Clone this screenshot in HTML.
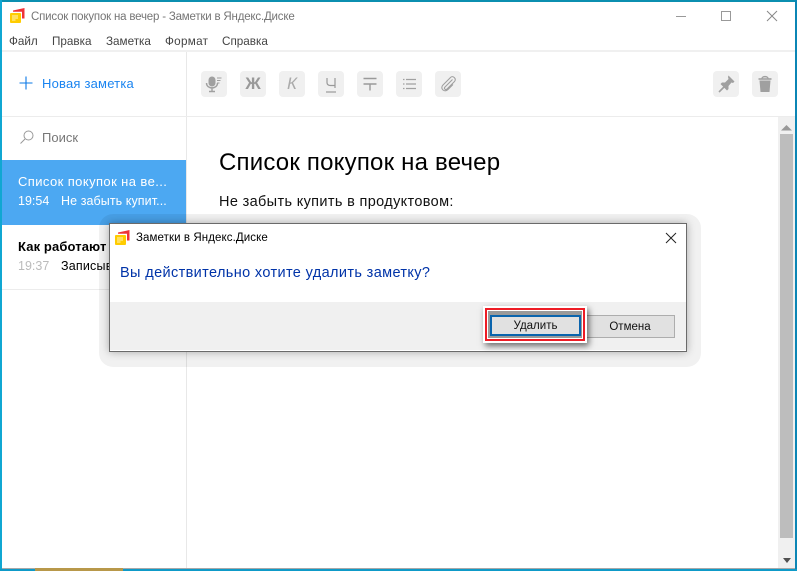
<!DOCTYPE html>
<html lang="ru"><head><meta charset="utf-8">
<style>
html,body{margin:0;padding:0;width:797px;height:571px;overflow:hidden;background:#fff;font-family:"Liberation Sans","DejaVu Sans",sans-serif}
div,span{position:absolute;white-space:nowrap}
.m{top:35px;font-size:11.7px;color:#444;line-height:14px}
.b{top:71px;width:26px;height:26px;background:#f0f0f0;border-radius:4px}
.b svg{position:absolute;left:0;top:0}
</style></head><body>
<!-- window frame -->
<div style="left:0;top:0;width:797px;height:2px;background:#0b8fb0"></div>
<div style="left:0;top:0;width:2px;height:571px;background:#10a7d2"></div>
<div style="left:795px;top:0;width:2px;height:571px;background:#0b86b5"></div>
<div style="left:0;top:569px;width:797px;height:2px;background:#0e9ac8"></div>
<div style="left:2px;top:568px;width:793px;height:1px;background:#a8a8a8"></div>
<div style="left:35px;top:568px;width:88px;height:3px;background:#b8984a"></div>
<!-- title -->
<svg style="position:absolute;left:9px;top:7px" width="18" height="18" viewBox="0 0 18 18"><path d="M4 3.500L15.500 1V11.500H13V4.800H4z" fill="#ee3338"/><rect x="1" y="6" width="11" height="10" rx="1" fill="#fc0"/><path d="M3 9h6M3 11h6M3 13h3.500" stroke="#fff5c0" stroke-width="1"/></svg>
<div style="left:31px;top:10px;font-size:11.500px;line-height:15px;color:#757575;letter-spacing:-.19px">Список покупок на вечер - Заметки в Яндекс.Диске</div>
<svg style="position:absolute;left:670px;top:5px" width="120" height="22"><path d="M6 11.500H16" stroke="#999" stroke-width="1"/><rect x="51.500" y="6.500" width="9" height="9" fill="none" stroke="#999"/><path d="M97 6L107 16M107 6L97 16" stroke="#888" stroke-width="1"/></svg>
<!-- menu -->
<div class="m" style="left:9px">Файл</div>
<div class="m" style="left:52px">Правка</div>
<div class="m" style="left:106px">Заметка</div>
<div class="m" style="left:165px;letter-spacing:.3px">Формат</div>
<div class="m" style="left:222px">Справка</div>
<div style="left:2px;top:50px;width:793px;height:2px;background:#f0f0f0"></div>
<!-- sidebar -->
<div style="left:186px;top:52px;width:1px;height:516px;background:#e8e8e8"></div>
<div style="left:2px;top:116px;width:793px;height:1px;background:#ececec"></div>
<svg style="position:absolute;left:19px;top:76px" width="14" height="14"><path d="M7 .5V13.500M.5 7H13.500" stroke="#0a78e6" stroke-width="1.100"/></svg>
<div style="left:42px;top:76px;font-size:13px;line-height:16px;color:#1a84f0;letter-spacing:.2px">Новая заметка</div>
<svg style="position:absolute;left:19px;top:129px" width="16" height="16"><circle cx="9.500" cy="6.500" r="4.500" fill="none" stroke="#999"/><path d="M6 10L1.500 14.500" stroke="#999"/></svg>
<div style="left:42px;top:130px;font-size:13px;line-height:16px;color:#777">Поиск</div>
<div style="left:2px;top:160px;width:184px;height:65px;background:#4ca8f2"></div>
<div style="left:18px;top:174px;font-size:13px;line-height:16px;color:#fff;letter-spacing:.41px">Список покупок на ве...</div>
<div style="left:18px;top:194px;font-size:12.500px;line-height:15px;color:#fff">19:54</div>
<div style="left:61px;top:194px;font-size:12.500px;line-height:15px;color:#fff;letter-spacing:.08px">Не забыть купит...</div>
<div style="left:18px;top:239px;font-size:13px;line-height:16px;color:#000;font-weight:bold;letter-spacing:.12px">Как работают</div>
<div style="left:18px;top:259px;font-size:12.500px;line-height:15px;color:#bbb">19:37</div>
<div style="left:61px;top:259px;font-size:12.500px;line-height:15px;color:#000;letter-spacing:.2px">Записыв</div>
<div style="left:2px;top:289px;width:184px;height:1px;background:#ececec"></div>
<!-- toolbar -->
<div class="b" style="left:201px"><svg width="26" height="26"><rect x="7.500" y="5.500" width="7" height="10" rx="3.500" fill="#a0a0a0"/><path d="M5.500 12c0 6.500 11 6.500 11 0M11 17v3.500M8 20.500h6" fill="none" stroke="#a0a0a0" stroke-width="1.400"/><path d="M16 7h4.500M16 9.500h3.500M16 12h2.500" stroke="#a0a0a0"/></svg></div>
<div class="b" style="left:240px;color:#999;font-size:17px;font-weight:bold;line-height:26px;text-align:center">Ж</div>
<div class="b" style="left:279px;color:#aaa;font-size:17px;font-style:italic;line-height:26px;text-align:center">К</div>
<div class="b" style="left:318px"><svg width="26" height="26"><path d="M9 7v4.500c0 2 1.500 3 3.500 3H17M17 7V17" fill="none" stroke="#999" stroke-width="1.200"/><path d="M8 21H18" stroke="#999" stroke-width="1.200"/></svg></div>
<div class="b" style="left:357px"><svg width="26" height="26"><path d="M6.500 7.500H19.500M6.500 13H19.500M13 13V19.500" stroke="#999" stroke-width="1.400" fill="none"/></svg></div>
<div class="b" style="left:396px"><svg width="26" height="26"><path d="M10 8.500H20M10 13H20M10 17.500H20M7 8.500H8.500M7 13H8.500M7 17.500H8.500" stroke="#a0a0a0" stroke-width="1.200"/></svg></div>
<div class="b" style="left:435px"><svg width="26" height="26"><path d="M17.500 8.500L10 16c-1.500 1.500 .5 3.500 2 2L19.500 10.500c2.500-2.500-1.500-6.500-4-4L8 14c-3.500 3.500 1.500 8 5 4.500l5-5" fill="none" stroke="#a0a0a0" stroke-width="1.100"/></svg></div>
<div class="b" style="left:713px"><svg width="26" height="26"><path d="M15.500 4.500L21.500 10.500 20 12 18.500 11.500 15.500 15 15.500 18 14 19.500 7.500 13 9 11.500 12 11.500 15.500 8 15 6z" fill="#a0a0a0"/><path d="M11 16L6 21" stroke="#a0a0a0" stroke-width="1.600"/></svg></div>
<div class="b" style="left:752px"><svg width="26" height="26"><path d="M7.500 9.500H18.500L17.500 21H8.500z" fill="#a0a0a0"/><path d="M6.500 8H19.500" stroke="#a0a0a0" stroke-width="1.600"/><path d="M10 7.500c0-2.500 6-2.500 6 0" fill="none" stroke="#a0a0a0" stroke-width="1.400"/></svg></div>
<!-- note -->
<div style="left:219px;top:149px;font-size:24px;line-height:28px;color:#000;letter-spacing:.2px">Список покупок на вечер</div>
<div style="left:219px;top:193px;font-size:14.500px;line-height:18px;color:#111;letter-spacing:.35px">Не забыть купить в продуктовом:</div>
<!-- scrollbar -->
<div style="left:778px;top:117px;width:17px;height:451px;background:#f0f0f0"></div>
<div style="left:780px;top:134px;width:13px;height:404px;background:#bdbdbd"></div>
<svg style="position:absolute;left:781px;top:124px" width="12" height="7"><path d="M0 6.500L5.500 1 11 6.500z" fill="#999"/></svg>
<svg style="position:absolute;left:783px;top:558px" width="10" height="6"><path d="M0 0H8L4 5z" fill="#505050"/></svg>
<!-- dialog halo -->
<div style="left:99px;top:214px;width:602px;height:153px;background:rgba(0,0,0,.055);border-radius:14px"></div>
<!-- dialog -->
<div style="left:109px;top:223px;width:576px;height:127px;background:#fff;border:1px solid #6a6a6a;box-shadow:0 0 8px rgba(0,0,0,.3)"></div>
<div style="left:110px;top:302px;width:576px;height:48px;background:#f0f0f0"></div>
<svg style="position:absolute;left:114px;top:229px" width="18" height="18" viewBox="0 0 18 18"><path d="M4 3.500L15.500 1V11.500H13V4.800H4z" fill="#ee3338"/><rect x="1" y="6" width="11" height="10" rx="1" fill="#fc0"/><path d="M3 9h6M3 11h6M3 13h3.500" stroke="#fff5c0" stroke-width="1"/></svg>
<div style="left:136px;top:231px;font-size:11.500px;line-height:15px;color:#000;letter-spacing:.09px">Заметки в Яндекс.Диске</div>
<svg style="position:absolute;left:664px;top:231px" width="14" height="14"><path d="M2 2L12 12M12 2L2 12" stroke="#222" stroke-width="1"/></svg>
<div style="left:120px;top:264px;font-size:14.500px;line-height:18px;color:#0033a8;letter-spacing:.37px">Вы действительно хотите удалить заметку?</div>
<!-- buttons -->
<div style="left:583px;top:315px;width:90px;height:21px;background:#e1e1e1;border:1px solid #adadad"></div>
<div style="left:585px;top:316px;width:90px;height:22px;font-size:11.500px;line-height:22px;text-align:center;color:#111">Отмена</div>
<div style="left:483px;top:306px;width:104px;height:37px;background:#fff;box-shadow:2px 3px 6px rgba(0,0,0,.55)"></div>
<div style="left:485px;top:308px;width:96px;height:29px;border:2px solid #ee1c25;background:#fff"></div>
<div style="left:488px;top:311px;width:94px;height:27px;background:#9a9a9a"></div>
<div style="left:490px;top:315px;width:87px;height:17px;background:#e1e1e1;border:2px solid #0a64ad"></div>
<div style="left:490px;top:315px;width:91px;height:22px;font-size:11.500px;line-height:22px;text-align:center;color:#111">Удалить</div>
</body></html>
